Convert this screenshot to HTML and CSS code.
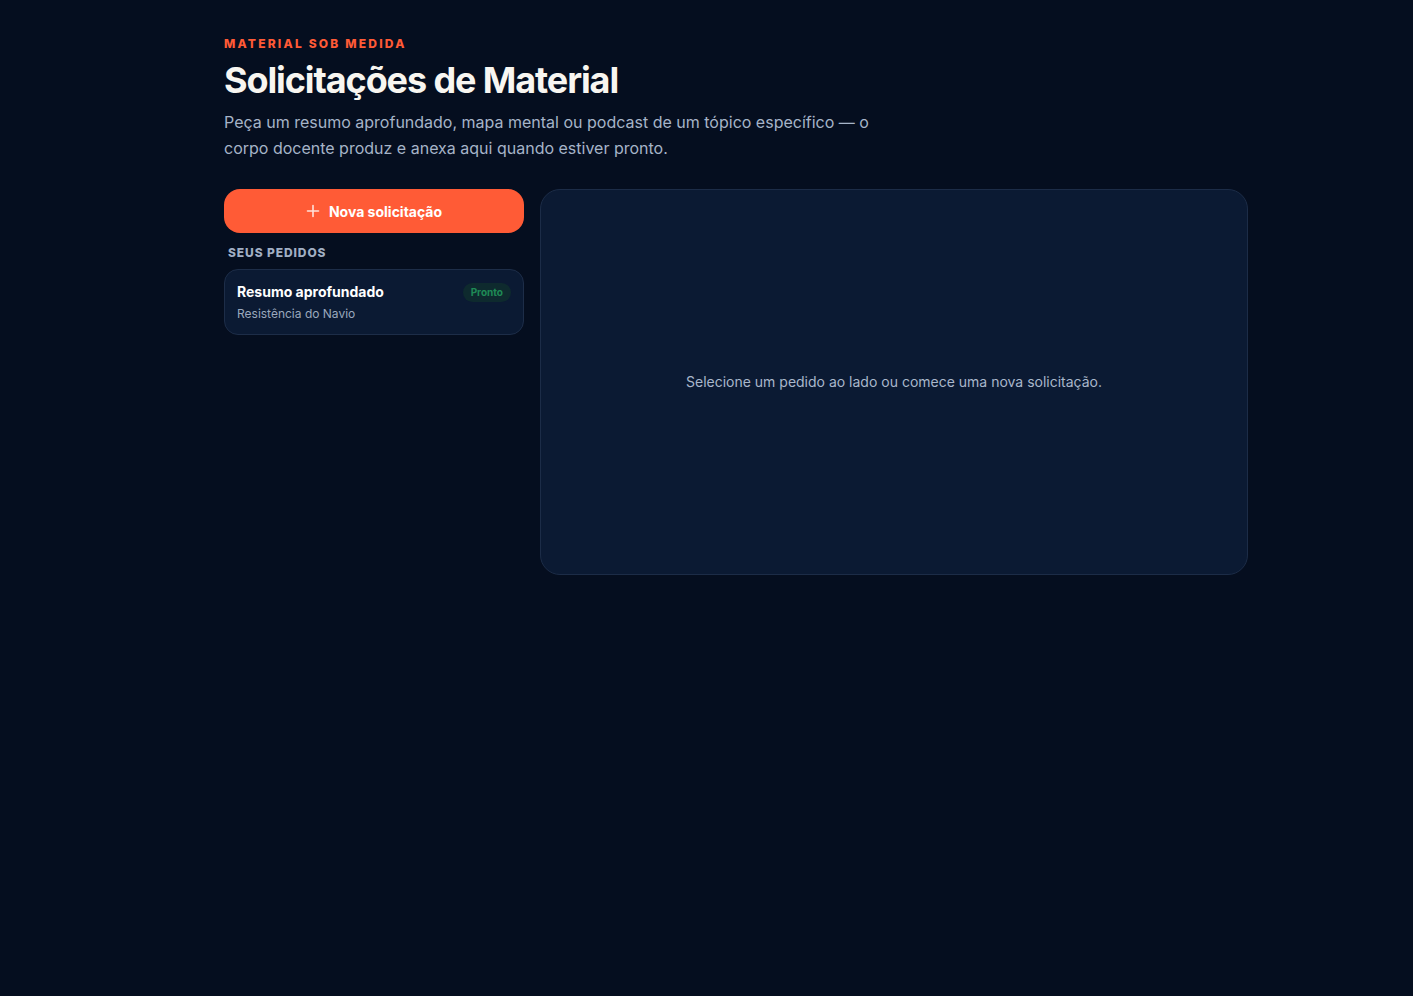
FILE: index.html
```html
<!DOCTYPE html>
<html lang="pt-BR">
<head>
<meta charset="utf-8">
<title>Solicitações de Material</title>
<link rel="stylesheet" href="styles.css">
</head>
<body>
<main class="page">
  <header class="intro">
    <p class="eyebrow">MATERIAL SOB MEDIDA</p>
    <h1 class="title">Solicitações de Material</h1>
    <p class="lead">Peça um resumo aprofundado, mapa mental ou podcast de um tópico específico — o corpo docente produz e anexa aqui quando estiver pronto.</p>
  </header>
  <div class="layout">
    <aside class="sidebar">
      <button class="new-btn" type="button">
        <svg class="plus" width="14" height="14" viewBox="0 0 14 14" fill="none" stroke="currentColor" stroke-width="1.6" stroke-linecap="round"><path d="M7 1.5v11M1.5 7h11"/></svg>
        <span>Nova solicitação</span>
      </button>
      <p class="section-label">SEUS PEDIDOS</p>
      <div class="request-card">
        <div class="req-text">
          <p class="req-title">Resumo aprofundado</p>
          <p class="req-sub">Resistência do Navio</p>
        </div>
        <span class="badge">Pronto</span>
      </div>
    </aside>
    <section class="panel">
      <p class="empty">Selecione um pedido ao lado ou comece uma nova solicitação.</p>
    </section>
  </div>
</main>
</body>
</html>
```

FILE: styles.css
```css
* { box-sizing: border-box; }
html, body { margin: 0; padding: 0; }
body {
  background: #050e1f;
  font-family: Inter, "Noto Sans", sans-serif;
  color: #e6ecf5;
  min-height: 996px;
}
p, h1 { margin: 0; }
.page {
  width: 1024px;
  margin-left: 224px;
  padding-top: 36px;
}
.eyebrow {
  font-size: 12px;
  line-height: 16px;
  font-weight: 800;
  letter-spacing: 2.2px;
  color: #ff5a36;
}
.title {
  margin-top: 6px;
  font-size: 36px;
  line-height: 44px;
  font-weight: 700;
  letter-spacing: -1.1px;
  color: #f8f6f1;
}
.lead {
  margin-top: 7px;
  max-width: 672px;
  font-size: 16px;
  line-height: 26px;
  color: #a6b4c8;
}
.layout {
  margin-top: 28px;
  display: flex;
  gap: 16px;
  align-items: flex-start;
}
.sidebar {
  width: 300px;
  flex: none;
  display: flex;
  flex-direction: column;
}
.new-btn {
  height: 44px;
  border: none;
  border-radius: 16px;
  background: #ff5b36;
  color: #fff;
  font-family: inherit;
  font-size: 14px;
  font-weight: 700;
  letter-spacing: 0;
  display: flex;
  align-items: center;
  justify-content: center;
  gap: 9px;
  cursor: pointer;
  padding: 0;
}
.plus { color: #ffe2da; }
.section-label {
  margin-top: 12px;
  padding-left: 4px;
  font-size: 12px;
  line-height: 16px;
  font-weight: 800;
  letter-spacing: 0.9px;
  color: #a1afc4;
}
.request-card {
  margin-top: 8px;
  height: 66px;
  border: 1px solid #1d2d48;
  border-radius: 14px;
  background: #0b1a33;
  padding: 13px 12px 0 12px;
  display: flex;
  justify-content: space-between;
  align-items: flex-start;
}
.req-title {
  font-size: 14px;
  line-height: 18px;
  font-weight: 700;
  color: #ffffff;
  letter-spacing: 0;
}
.req-sub {
  margin-top: 5px;
  font-size: 12px;
  line-height: 15px;
  color: #9aa8bd;
}
.badge {
  height: 19px;
  padding: 0 8px;
  border-radius: 10px;
  background: #0e2a2e;
  color: #1f8a56;
  font-size: 10px;
  font-weight: 700;
  line-height: 19px;
}
.panel {
  flex: 1;
  height: 386px;
  border: 1px solid #1c2c47;
  border-radius: 20px;
  background: #0b1a33;
  display: flex;
  align-items: center;
  justify-content: center;
}
.empty {
  font-size: 14px;
  line-height: 20px;
  color: #a9b7cb;
}
```
